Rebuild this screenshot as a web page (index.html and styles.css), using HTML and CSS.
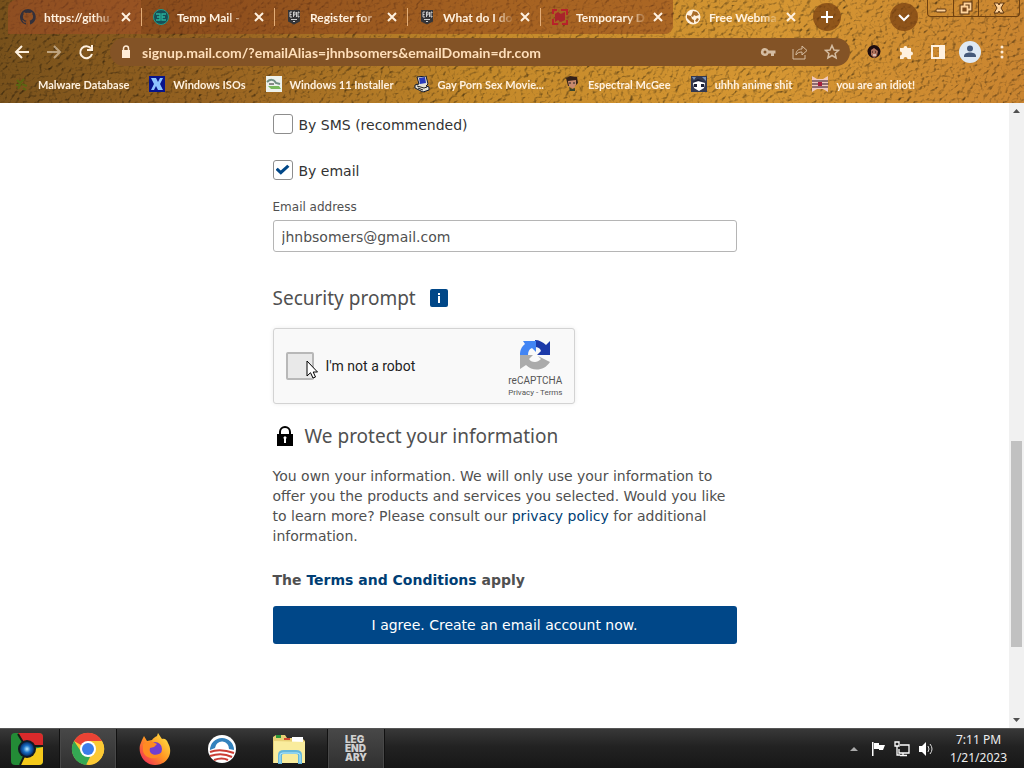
FILE: index.html
```html
<!DOCTYPE html>
<html lang="en">
<head>
    <meta charset="UTF-8">
    <meta name="viewport" content="width=device-width, initial-scale=1.0">
    <title>Free Webmail - Sign up</title>
    <link rel="stylesheet" href="styles.css">
</head>
<body>
    <header class="browser">
        <svg class="texture" aria-hidden="true">
            <filter id="leather" x="0" y="0" width="100%" height="100%">
                <feTurbulence type="fractalNoise" baseFrequency="0.22 0.26" numOctaves="4" seed="7"/>
                <feColorMatrix values="0 0 0 0 0  0 0 0 0 0  0 0 0 0 0  1 0 0 0 0"/>
                <feDiffuseLighting surfaceScale="3" diffuseConstant="1.25" lighting-color="#fff">
                    <feDistantLight azimuth="215" elevation="60"/>
                </feDiffuseLighting>
            </filter>
            <rect width="100%" height="100%" filter="url(#leather)"/>
        </svg>

        <div class="tab-row">
            <nav class="tabs" aria-label="Tabs">
                <div class="tab">
                    <svg class="icon" viewBox="0 0 16 16"><path fill="#33303a" d="M8 0a8 8 0 0 0-2.5 15.6c.4 0 .5-.2.5-.4v-1.5c-2.2.5-2.7-1-2.7-1-.4-.9-.9-1.2-.9-1.2-.7-.5.1-.5.1-.5.8.1 1.2.8 1.2.8.7 1.3 1.9.9 2.3.7.1-.5.3-.9.5-1.1-1.8-.2-3.6-.9-3.6-4 0-.9.3-1.6.8-2.1-.1-.2-.4-1 .1-2.1 0 0 .7-.2 2.2.8a7.5 7.5 0 0 1 4 0c1.5-1 2.2-.8 2.2-.8.5 1.1.2 1.9.1 2.1.5.5.8 1.2.8 2.1 0 3.1-1.9 3.8-3.7 4 .3.3.6.8.6 1.5v2.2c0 .2.1.5.5.4A8 8 0 0 0 8 0z"/></svg>
                    <span class="tab-title">https://githu</span>
                    <button class="tab-close" aria-label="Close tab"><svg viewBox="0 0 10 10"><path d="M1 1l8 8M9 1L1 9"/></svg></button>
                </div>
                <div class="tab">
                    <svg class="icon" viewBox="0 0 16 16"><circle cx="8" cy="8" r="7.5" fill="#174f57" stroke="#1f9a8b"/><path d="M3 5h4v6H3M4 8h3M13 5H9v6h4M9 8h3" fill="none" stroke="#28b39c" stroke-width="1.3"/></svg>
                    <span class="tab-title">Temp Mail - </span>
                    <button class="tab-close" aria-label="Close tab"><svg viewBox="0 0 10 10"><path d="M1 1l8 8M9 1L1 9"/></svg></button>
                </div>
                <div class="tab">
                    <svg class="icon" viewBox="0 0 16 16"><path fill="#343437" d="M2 1h12v11.5L8 15.5l-6-3z"/><path d="M6 3H4v5h2M4 5.5h1.5M7.5 8V3H9v3H7.5M10.5 3v5M13 4V3h-1v5h1V7M5 10.5h6M7 12.5h2" fill="none" stroke="#ddd" stroke-width=".9"/></svg>
                    <span class="tab-title">Register for</span>
                    <button class="tab-close" aria-label="Close tab"><svg viewBox="0 0 10 10"><path d="M1 1l8 8M9 1L1 9"/></svg></button>
                </div>
                <div class="tab">
                    <svg class="icon" viewBox="0 0 16 16"><path fill="#343437" d="M2 1h12v11.5L8 15.5l-6-3z"/><path d="M6 3H4v5h2M4 5.5h1.5M7.5 8V3H9v3H7.5M10.5 3v5M13 4V3h-1v5h1V7M5 10.5h6M7 12.5h2" fill="none" stroke="#ddd" stroke-width=".9"/></svg>
                    <span class="tab-title">What do I do</span>
                    <button class="tab-close" aria-label="Close tab"><svg viewBox="0 0 10 10"><path d="M1 1l8 8M9 1L1 9"/></svg></button>
                </div>
                <div class="tab">
                    <svg class="icon" viewBox="0 0 16 16"><path d="M1 5V1h4M9 1h6v5M1 10v5h5M10 15h5v-4" fill="none" stroke="#b8222a" stroke-width="2"/><path fill="#a8242a" d="M3 5l3-2 3 2 4-2v8l-4 2-3-2-3 2z"/></svg>
                    <span class="tab-title">Temporary D</span>
                    <button class="tab-close" aria-label="Close tab"><svg viewBox="0 0 10 10"><path d="M1 1l8 8M9 1L1 9"/></svg></button>
                </div>
                <div class="tab tab-active">
                    <svg class="icon" viewBox="0 0 16 16"><circle cx="8" cy="8" r="7.5" fill="#fff1df"/><path fill="#a96b28" d="M2 6l4 1 1 3 2 1v3l-3-1-4-4zM8 2l4 1 2 3-3 1-2-1-1 2-2-1 1-2zM12 9l2 1-2 3-2-1z"/></svg>
                    <span class="tab-title">Free Webma</span>
                    <button class="tab-close" aria-label="Close tab"><svg viewBox="0 0 10 10"><path d="M1 1l8 8M9 1L1 9"/></svg></button>
                </div>
            </nav>
            <button class="round-button" aria-label="New tab"><svg viewBox="0 0 14 14"><path d="M7 1v12M1 7h12"/></svg></button>
            <button class="round-button tab-search" aria-label="Search tabs"><svg viewBox="0 0 14 14"><path d="M2 5l5 5 5-5"/></svg></button>
            <div class="window-controls">
                <button aria-label="Minimize"><svg viewBox="0 0 14 14"><rect x="2" y="8" width="10" height="3" rx="1" fill="#ffd39a" stroke="#5d3510"/></svg></button>
                <button aria-label="Restore"><svg viewBox="0 0 14 14"><g fill="none" stroke="#5d3510" stroke-width="4"><path d="M5.5 2.5h6v6h-6z"/><path d="M2.5 5.5h6v6h-6z"/></g><g fill="none" stroke="#ffd39a" stroke-width="1.8"><path d="M5.5 2.5h6v6h-6z"/><path fill="#7b481b" d="M2.5 5.5h6v6h-6z"/></g></svg></button>
                <button class="window-close" aria-label="Close"><svg viewBox="0 0 14 14"><path d="M2 2h4l1 2 1-2h4L9 7l3 5H8L7 10l-1 2H2l3-5z" fill="#ffd39a" stroke="#5d3510"/></svg></button>
            </div>
        </div>

        <div class="toolbar">
            <button class="tool" aria-label="Back"><svg viewBox="0 0 16 16"><path d="M15 8H2M8 2L2 8l6 6"/></svg></button>
            <button class="tool tool-disabled" aria-label="Forward"><svg viewBox="0 0 16 16"><path d="M1 8h13M8 2l6 6-6 6"/></svg></button>
            <button class="tool" aria-label="Reload"><svg viewBox="0 0 16 16"><path d="M13 4.5A6 6 0 1 0 14 10M14 1v5H9"/></svg></button>
            <div class="omnibox">
                <svg class="lock" viewBox="0 0 12 14"><path fill="#ffecd6" d="M2 5h8v8H2z"/><path d="M3.500 6V3.500a2.500 2.500 0 0 1 5 0V6" fill="none" stroke="#ffecd6" stroke-width="1.5"/></svg>
                <input class="url" type="text" aria-label="Address" value="signup.mail.com/?emailAlias=jhnbsomers&amp;emailDomain=dr.com">
                <button aria-label="Passwords"><svg viewBox="0 0 16 16"><path fill="#d5bda2" stroke="none" fill-rule="evenodd" d="M5 4a4 4 0 1 0 3.6 5.5H11V12h3V9.500h1.500v-3H8.600A4 4 0 0 0 5 4zm0 2.500a1.500 1.500 0 1 1 0 3 1.500 1.500 0 0 1 0-3z"/></svg></button>
                <button aria-label="Share"><svg viewBox="0 0 16 16"><path d="M1 5v10h12v-4M4 11c0-4 2-6 6-6V2l5 4.500L10 11V8C7 8 5 9 4 11z"/></svg></button>
                <button aria-label="Bookmark"><svg viewBox="0 0 16 16"><path stroke-width="1.5" d="M8 1.500l2 4.500 4.500.4-3.400 3 1 4.600L8 11.500 3.900 14l1-4.600-3.400-3L6 6z"/></svg></button>
            </div>
            <button class="tool" aria-label="Extension"><svg viewBox="0 0 16 16"><circle cx="8" cy="7.500" r="6.500" fill="#1c0c10" stroke="none"/><path fill="#b0725c" stroke="none" d="M5 6l3-2 4 3-1 5-3 2-3-3z"/><path d="M6 8h1M9 8h1" stroke="#2b1410" stroke-width="1"/><path d="M7 11h3" stroke="#fff" stroke-width="1"/></svg></button>
            <button class="tool" aria-label="Extensions"><svg viewBox="0 0 16 16"><path fill="#fff1df" stroke="none" d="M2 4h3.500a2 2 0 1 1 4 0H13v3.500a2 2 0 1 1 0 4V15H9.500a2 2 0 0 0-4 0H2v-3.500a2 2 0 0 0 0-4z"/></svg></button>
            <button class="tool" aria-label="Side panel"><svg viewBox="0 0 16 16"><path fill="#fff1df" fill-rule="evenodd" stroke="none" d="M1 1h14v14H1zm2 2v10h6V3z"/></svg></button>
            <button class="profile" aria-label="Profile"><svg viewBox="0 0 22 22"><circle cx="11" cy="11" r="11" fill="#dfe9f4"/><circle cx="11" cy="7.500" r="3" fill="#45597b"/><path fill="#45597b" d="M5 16v-1c0-2.500 3-3.500 6-3.500s6 1 6 3.500v1z"/></svg></button>
            <button class="tool" aria-label="Menu"><svg viewBox="0 0 16 16"><g fill="#ffecd6" stroke="none"><circle cx="8" cy="3" r="1.500"/><circle cx="8" cy="8" r="1.500"/><circle cx="8" cy="13" r="1.500"/></g></svg></button>
        </div>

        <nav class="bookmarks" aria-label="Bookmarks">
            <a href="#"><svg class="icon" viewBox="0 0 16 16"><path d="M3 4l3 3 4-4M2 9h4l-2 4M8 8l5 2M9 12l3 2" fill="none" stroke="#5c6412" stroke-width="2"/></svg>Malware Database</a>
            <a href="#"><svg class="icon" viewBox="0 0 16 16"><path fill="#07148c" d="M0 0h16v16H0z"/><path fill="#8cc4ff" d="M2 2h5l2 4 2-4h3l-3 6 3 6H9l-2-4-2 4H2l3-6z"/></svg>Windows ISOs</a>
            <a href="#"><svg class="icon" viewBox="0 0 16 16"><path fill="#edf1ec" d="M0 0h16v16H0z"/><path d="M1 6c3-3 7-3 9 1l4 1" fill="none" stroke="#6f8d80" stroke-width="2"/><path d="M2 10h11l2 3H5" fill="#78b95a"/><path d="M3 8h5" stroke="#222"/></svg>Windows 11 Installer</a>
            <a href="#"><svg class="icon" viewBox="0 0 16 16"><path fill="#e5e2d5" stroke="#111a30" d="M3 1l9-1 2 8-2 2 3 1v3l-6 2-8-4V9l4-1z"/><path fill="#2739ba" d="M5 2l6-1 1 6-6 1z"/><path d="M3 10l7 2 3-1M4 12l5 2" fill="none" stroke="#222"/></svg>Gay Porn Sex Movie...</a>
            <a href="#"><svg class="icon" viewBox="0 0 16 16"><path fill="#332018" d="M2 2l4-2 7 1 1 6-3 3H4z"/><path fill="#c7896d" d="M4 5l8-1v5l-3 4-4-3z"/><path fill="#39432c" d="M5 11l3 2 3-1v3H6z"/><path d="M5 7h2M9 7h2" stroke="#222"/></svg>Espectral McGee</a>
            <a href="#"><svg class="icon" viewBox="0 0 16 16"><path fill="#343950" d="M0 0h16v16H0z"/><path fill="#fff" d="M2 7l5-2 7 2-1 5-5 3-5-3z"/><path fill="#1c2035" d="M3 8h3v3H3zM10 8h3v3h-3zM1 6l6-3 7 3-6-1z"/><path fill="#7890b3" d="M1 1h4L3 4zM11 1h4v4z"/></svg>uhhh anime shit</a>
            <a href="#"><svg class="icon" viewBox="0 0 16 16"><path fill="#f0c9bd" d="M0 0l5 3h6l5-3v16l-5-3H5l-5 3z"/><path d="M0 5h16M0 8h16M0 11h16" stroke="#2b1026"/><path fill="#a61e3b" d="M6 6h4v4H6z"/></svg>you are an idiot!</a>
        </nav>
    </header>

    <div class="viewport">
        <main class="page">
            <form class="signup">
                <label class="check"><input type="checkbox"><span>By SMS (recommended)</span></label>
                <label class="check"><input type="checkbox" checked><span>By email</span></label>
                <label class="field-label" for="email">Email address</label>
                <input class="field" id="email" type="email" value="jhnbsomers@gmail.com">

                <h2 class="security">Security prompt <button class="info" type="button" aria-label="Information"><svg viewBox="0 0 18 18"><path fill="#fff" d="M8 4h2v2H8zM8 7h2v7H8z"/></svg></button></h2>

                <div class="captcha">
                    <div class="captcha-box">
                        <input type="checkbox" id="robot">
                        <svg class="cursor" viewBox="0 0 12 19"><path d="M1 1v15l3.500-3.300L7 18l2.500-1L7.200 12H11.500z" fill="#fff" stroke="#000"/></svg>
                    </div>
                    <label for="robot">I'm not a robot</label>
                    <div class="captcha-brand">
                        <svg viewBox="0 0 32 32"><path fill="#1c3aa9" d="M16 1c4 0 8 2 11 5l4-4v14H18l4-4c-1-3-3-4-6-4z"/><path fill="#4285f4" d="M4 2h13v11l-4-4c-3 1-4 4-4 7H1c0-4 1-8 5-11z"/><path fill="#ababab" d="M1 16h13l-4 4c1 2 3 3 6 3 2 0 4-1 6-3l-3-3 12 6c-6 9-17 10-24 3l-6 4z"/></svg>
                        <span class="captcha-name">reCAPTCHA</span>
                        <span class="captcha-links"><a href="#">Privacy</a> - <a href="#">Terms</a></span>
                    </div>
                </div>

                <h2 class="protect"><svg viewBox="0 0 18 22"><path fill="#000" fill-rule="evenodd" d="M1 9h2V7a6 6 0 0 1 12 0v2h2v12H1zm4 0h8V7a4 4 0 0 0-8 0zm3 5v4h2v-4a1.500 1.500 0 1 0-2 0z"/></svg>We protect your information</h2>
                <p>You own your information. We will only use your information to offer you the products and services you selected. Would you like to learn more? Please consult our <a href="#">privacy policy</a> for additional information.</p>
                <p class="terms">The <a href="#">Terms and Conditions</a> apply</p>
                <button class="submit" type="submit">I agree. Create an email account now.</button>
            </form>
        </main>
        <div class="scrollbar">
            <svg viewBox="0 0 15 15"><path d="M4 10l3.500-4 3.500 4z"/></svg>
            <div class="track"><div class="thumb"></div></div>
            <svg viewBox="0 0 15 15"><path d="M4 5l3.500 4L11 5z"/></svg>
        </div>
    </div>

    <footer class="taskbar">
        <button class="task start" aria-label="Start"><svg viewBox="0 0 34 34"><defs><radialGradient id="orb"><stop offset="0" stop-color="#c4efff"/><stop offset=".5" stop-color="#1c73c8"/><stop offset="1" stop-color="#052d69"/></radialGradient></defs><rect x="1" y="1" width="32" height="32" rx="4" fill="#238b36"/><path fill="#d92a2b" d="M8 1h21q4 0 4 4v10H17z"/><path fill="#f5c91b" d="M33 15v14q0 4-4 4H10l8-15z"/><path d="M8 2l6 10M20 14h13M16 20l-6 13" stroke="#151b16" stroke-width="2"/><circle cx="17" cy="17" r="9" fill="#121a23"/><circle cx="17" cy="17" r="7" fill="url(#orb)"/></svg></button>
        <button class="task task-open" aria-label="Chrome"><svg viewBox="0 0 34 34"><circle cx="17" cy="17" r="16" fill="#fcc934"/><path fill="#ea4335" d="M17 17L3 9a16 16 0 0 1 28 0z"/><path fill="#34a853" d="M3 9l8 12 8 4-4 8A16 16 0 0 1 3 9z"/><path fill="#fcc934" d="M17 9h14a16 16 0 0 1-14 24l7-12z"/><circle cx="17" cy="17" r="8" fill="#fff"/><circle cx="17" cy="17" r="6" fill="#3b7de9"/></svg></button>
        <button class="task" aria-label="Firefox"><svg viewBox="0 0 34 34"><defs><linearGradient id="fire" x1="1" y1="0" x2="0" y2="1"><stop stop-color="#fff04a"/><stop offset=".5" stop-color="#ff9522"/><stop offset="1" stop-color="#ef1763"/></linearGradient></defs><path fill="url(#fire)" d="M4 8l2-4 3 5 5-1c1-2 3-3 5-4l1-3 4 6c3-1 5 1 6 4 6 10-1 22-13 22C6 33 0 22 2 13z"/><circle cx="17" cy="17" r="7" fill="#713fd0"/><path fill="#ff8b22" d="M5 12l8-3 6 3-3 3-4 1c-2 7 7 9 12 4-2 9-17 8-19-1z"/></svg></button>
        <button class="task" aria-label="Sunrise"><svg viewBox="0 0 34 34"><circle cx="17" cy="17" r="14" fill="#fff"/><path fill="#3282bd" d="M5 18a12 12 0 1 1 24 0l-5-1a7 7 0 0 0-14-1z"/><path d="M5 20q10-4 24 1M5 24q12-4 22 1M9 28q8-3 14 0" fill="none" stroke="#cb3d35" stroke-width="2"/></svg></button>
        <button class="task" aria-label="File Explorer"><svg viewBox="0 0 34 34"><path fill="#e8d076" d="M1 5l3-2h9l2 3h15l3 3v22H1z"/><path fill="#2b963a" d="M4 3h5v3H4z"/><path fill="#d04a32" d="M12 6h6v2h-6z"/><path fill="#fff" d="M20 5h11v5H20z"/><path fill="#f9ec9d" d="M2 9l31 1v21H2z"/><path d="M8 32V23q0-3 4-3h12q4 0 4 3v9" fill="none" stroke="#65b7dc" stroke-width="4"/><path d="M8 31v-8q0-2 3-2h14q3 0 3 2v8" fill="none" stroke="#b9edff"/></svg></button>
        <button class="task task-open"><span class="legendary">LEG<br>END<br>ARY</span></button>
        <div class="tray">
            <svg viewBox="0 0 16 16"><path fill="#aaa" d="M4 10l4-4 4 4z"/></svg>
            <svg viewBox="0 0 16 16"><path fill="#fff" d="M2 1h1.500v14H2zM4 2h5v2h6l-2 5H9V8H4z"/></svg>
            <svg viewBox="0 0 16 16"><path d="M6 4h9v8H5V8M9 12v2M6 14.500h7M1 1h4v4H1zM3 5v9h3" fill="none" stroke="#fff" stroke-width="1.300"/></svg>
            <svg viewBox="0 0 16 16"><path fill="#fff" d="M1 5h3l4-4v14l-4-4H1z"/><path d="M10 5q2 3 0 6M12 3q4 5 0 10" fill="none" stroke="#ddd"/></svg>
            <div class="clock"><span>7:11 PM</span><span>1/21/2023</span></div>
        </div>
    </footer>
</body>
</html>
```

FILE: styles.css
```css
* {
    box-sizing: border-box;
}
body {
    display: flex;
    flex-direction: column;
    height: 100vh;
    margin: 0;
    background: #fff;
    font-family: Verdana, "DejaVu Sans", sans-serif;
    font-size: 14px;
    color: #505050;
}
button {
    padding: 0;
    border: 0;
    background: none;
    font-family: inherit;
}
svg {
    display: block;
    flex: none;
}
a {
    color: #003e74;
    text-decoration: none;
}

/* browser window */
.browser {
    position: relative;
    isolation: isolate;
    flex: none;
    height: 103px;
    overflow: hidden;
    background: linear-gradient(100deg, #76501b 0%, #976321 22%, #c4892a 48%, #d69733 75%, #c98430 100%);
    color: #fff1df;
    font-family: "Comic Sans MS", Lato, sans-serif;
    font-size: 12px;
    font-weight: bold;
}
.texture {
    position: absolute;
    z-index: -1;
    inset: 0;
    width: 100%;
    height: 100%;
    mix-blend-mode: multiply;
}
.tab-row {
    display: flex;
    align-items: center;
    height: 34px;
    padding-left: 8px;
}
.tabs {
    display: flex;
    flex: 0 1 798px;
    min-width: 0;
    height: 34px;
}
.tab {
    display: flex;
    flex: 1;
    align-items: center;
    gap: 8px;
    min-width: 0;
    padding: 0 7px 0 12px;
    background: rgba(165, 75, 40, 0.5);
}
.tab:first-child {
    border-radius: 8px 0 0 0;
}
.tab:nth-child(5) {
    border-radius: 0 0 8px 0;
}
.tab + .tab {
    background: linear-gradient(#e3ad77, #e3ad77) left center / 1px 18px no-repeat, rgba(135, 60, 25, 0.5);
}
.tab + .tab-active {
    background: none;
}
.icon {
    width: 16px;
    height: 16px;
}
.tab-title {
    flex: 1;
    margin-right: -6px;
    overflow: hidden;
    white-space: nowrap;
    mask-image: linear-gradient(to right, #000 70%, transparent);
}
.tab-close svg {
    width: 16px;
    height: 16px;
    padding: 3px;
    stroke: #fff1df;
    stroke-width: 2;
}
.round-button {
    display: flex;
    align-items: center;
    justify-content: center;
    flex: none;
    width: 28px;
    height: 28px;
    margin-left: 7px;
    border-radius: 50%;
    background: rgba(115, 60, 15, 0.7);
}
.round-button svg {
    width: 14px;
    height: 14px;
    fill: none;
    stroke: #fff;
    stroke-width: 2;
}
.tab-search {
    margin-left: auto;
}
.window-controls {
    display: flex;
    align-self: flex-start;
    height: 17px;
    margin: 0 4px 0 9px;
    border: 1px solid #70410f;
    border-top: 0;
    border-radius: 0 0 4px 4px;
}
.window-controls button {
    display: flex;
    align-items: center;
    justify-content: center;
    width: 25px;
}
.window-controls button + button {
    border-left: 1px solid #70410f;
}
.window-controls .window-close {
    width: 41px;
}
.window-controls svg {
    width: 14px;
    height: 14px;
}
.toolbar {
    display: flex;
    align-items: center;
    gap: 16px;
    height: 36px;
    padding: 0 14px;
}
.tool svg {
    width: 16px;
    height: 16px;
    fill: none;
    stroke: #fff1df;
    stroke-width: 2;
}
.tool-disabled {
    opacity: 0.5;
}
.omnibox {
    display: flex;
    flex: 1;
    align-items: center;
    gap: 16px;
    min-width: 0;
    height: 28px;
    padding: 0 10px;
    border-radius: 14px;
    background: #835326;
}
.lock {
    width: 12px;
    height: 14px;
}
.url {
    flex: 1;
    min-width: 0;
    margin-left: -6px;
    padding: 0;
    border: 0;
    background: none;
    color: #ffdfba;
    font: bold 14px "Comic Sans MS", Lato, sans-serif;
}
.omnibox button svg {
    width: 16px;
    height: 16px;
    fill: none;
    stroke: #d5bda2;
}
.profile {
    margin: 0 -3px;
}
.profile svg {
    width: 22px;
    height: 22px;
}
.bookmarks {
    display: flex;
    gap: 20px;
    height: 28px;
    padding-left: 14px;
    overflow: hidden;
    font-size: 11px;
}
.bookmarks a {
    display: flex;
    align-items: center;
    gap: 8px;
    color: inherit;
    white-space: nowrap;
}

/* web page */
.viewport {
    display: flex;
    flex: 1;
    min-height: 0;
}
.page {
    flex: 1;
    min-width: 0;
    padding: 11px 16px 0;
    overflow: hidden;
}
.signup {
    display: flex;
    flex-direction: column;
    max-width: 464px;
    margin: 0 auto;
    line-height: 20px;
}
.check {
    display: flex;
    align-items: center;
    gap: 6px;
    height: 20px;
    color: #333;
}
.check span {
    padding-top: 2px;
}
.check + .check {
    margin-top: 26px;
}
.check input {
    appearance: none;
    width: 20px;
    height: 20px;
    margin: 0;
    border: 1px solid #8d8d8d;
    border-radius: 3px;
    background: #fff;
}
.check input:checked::before {
    content: "";
    display: block;
    width: 14px;
    height: 12px;
    margin: 3px 2px;
    background: #004788;
    clip-path: polygon(0 48%, 16% 32%, 38% 55%, 84% 6%, 100% 22%, 38% 90%);
}
.field-label {
    margin-top: 17px;
    font-size: 12px;
}
.field {
    height: 32px;
    margin-top: 3px;
    padding: 1px 8px 0;
    border: 1px solid #b5b5b5;
    border-radius: 3px;
    color: #505050;
    font: inherit;
}
h2 {
    display: flex;
    align-items: center;
    margin: 0;
    font: 19px/28px "Droid Sans", "Noto Sans", sans-serif;
}
.security {
    gap: 14px;
    margin-top: 32px;
}
.info svg {
    width: 18px;
    height: 18px;
    border-radius: 2px;
    background: #004788;
}
.captcha {
    display: flex;
    align-items: center;
    width: 302px;
    height: 76px;
    margin-top: 16px;
    padding: 0 11px 0 12px;
    border: 1px solid #d3d3d3;
    border-radius: 3px;
    background: #f9f9f9;
    box-shadow: 0 0 4px rgba(0, 0, 0, 0.08);
    color: #222;
    font: 14px/20px Roboto, sans-serif;
}
.captcha-box {
    position: relative;
    margin-right: 12px;
}
.captcha-box input {
    appearance: none;
    display: block;
    width: 28px;
    height: 28px;
    margin: 0;
    border: 2px solid #b8b8b8;
    border-radius: 2px;
    background: #e9e9e9;
}
.cursor {
    position: absolute;
    top: 8px;
    left: 20px;
    width: 12px;
    height: 19px;
}
.captcha-brand {
    display: flex;
    flex-direction: column;
    align-items: center;
    margin-left: auto;
    padding-top: 6px;
    color: #555;
}
.captcha-brand svg {
    width: 32px;
    height: 32px;
    margin-bottom: 4px;
}
.captcha-name {
    font-size: 10px;
    line-height: 12px;
}
.captcha-links {
    font-size: 8px;
    line-height: 12px;
}
.captcha-links a {
    color: inherit;
}
.protect {
    gap: 11px;
    margin-top: 18px;
    padding-left: 3px;
}
.protect svg {
    width: 18px;
    height: 22px;
}
p {
    margin: 16px 0 0;
}
.terms {
    margin-top: 24px;
    font-weight: bold;
}
.submit {
    height: 38px;
    margin-top: 16px;
    border-radius: 3px;
    background: #004788;
    color: #fff;
    font-size: 14px;
}
.scrollbar {
    display: flex;
    flex-direction: column;
    flex: none;
    width: 15px;
    background: #f1f1f1;
}
.scrollbar svg {
    width: 15px;
    height: 15px;
    fill: #505050;
}
.track {
    display: flex;
    flex: 1;
    flex-direction: column;
    justify-content: flex-end;
    padding: 0 2px 66px;
}
.thumb {
    height: 39%;
    background: #c1c1c1;
}

/* desktop taskbar */
.taskbar {
    display: flex;
    flex: none;
    gap: 9px;
    height: 40px;
    background: linear-gradient(#383838, #222 45%, #171717);
    border-top: 1px solid #555;
}
.task {
    display: flex;
    align-items: center;
    justify-content: center;
    width: 58px;
}
.task svg {
    width: 34px;
    height: 34px;
}
.start {
    width: 50px;
    padding-left: 4px;
}
.task-open {
    border: solid #111;
    border-width: 0 1px;
    background: linear-gradient(#484848, #303030);
    box-shadow: inset 1px 0 #484848, inset -1px 0 #484848;
}
.legendary {
    color: #d0d0d0;
    font: 900 10px/9px Inter, "Liberation Sans", sans-serif;
    text-align: left;
}
.tray {
    display: flex;
    align-items: center;
    gap: 8px;
    margin-left: auto;
    padding-right: 17px;
}
.tray svg {
    width: 16px;
    height: 16px;
}
.clock {
    display: flex;
    flex-direction: column;
    align-items: center;
    margin-left: 8px;
    color: #eee;
    font: 12px/18px "Segoe UI", "Noto Sans", sans-serif;
}
```
